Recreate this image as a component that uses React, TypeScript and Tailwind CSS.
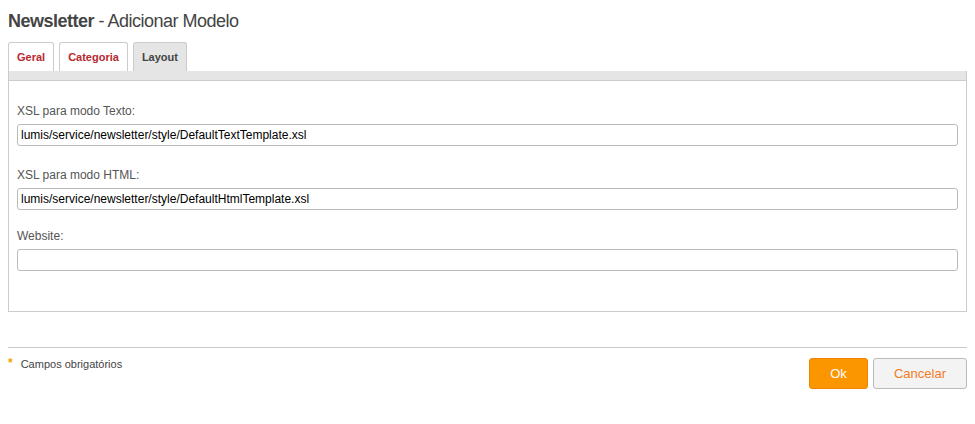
import React, { useState } from "react";

const fields = [
  { label: "XSL para modo Texto:", value: "lumis/service/newsletter/style/DefaultTextTemplate.xsl", gap: "" },
  { label: "XSL para modo HTML:", value: "lumis/service/newsletter/style/DefaultHtmlTemplate.xsl", gap: "mt-[22px]" },
  { label: "Website:", value: "", gap: "mt-[19px]" },
];

const tabs = ["Geral", "Categoria", "Layout"];

const App: React.FC = () => {
  const [active, setActive] = useState("Layout");

  return (
    <div className="bg-white px-2 pt-[9px] font-['Liberation_Sans',Arial,sans-serif] text-[#444]">
      <h1 className="text-[18px] leading-[24px] tracking-[-0.5px]">
        <span className="font-bold">Newsletter</span> - Adicionar Modelo
      </h1>

      <div className="mt-[9px] flex gap-[5px]">
        {tabs.map((t) => (
          <button
            key={t}
            onClick={() => setActive(t)}
            className={`h-[29px] rounded-t-[3px] border border-b-0 border-[#ccc] px-2 text-[11px] font-bold ${
              active === t ? "bg-[#e5e5e5] text-[#444]" : "bg-white text-[#b8282e]"
            }`}
          >
            {t}
          </button>
        ))}
      </div>

      <div className="h-[241px] border border-t-0 border-[#ccc]">
        <div className="h-[10px] border-b border-[#ccc] bg-[#e5e5e5]" />
        <div className="flex flex-col px-2 pt-[23px]">
          {fields.map((f) => (
            <div key={f.label} className={`flex flex-col ${f.gap}`}>
              <label className="text-[12px] leading-[14px] text-[#555]">{f.label}</label>
              <input
                defaultValue={f.value}
                className="mt-[6px] h-[22px] rounded-[3px] border border-[#bbb] px-[3px] text-[12px] text-black outline-none"
              />
            </div>
          ))}
        </div>
      </div>

      <div className="mt-[35px] border-t border-[#c8c8c8]" />
      <div className="flex items-start justify-between pt-[10px]">
        <div className="flex items-center gap-[8px] text-[11px] leading-[13px] text-[#444]">
          <span className="-mt-[3px] text-[12px] font-bold leading-none text-[#f5a300]">*</span>
          <span>Campos obrigatórios</span>
        </div>
        <div className="flex gap-[5px]">
          <button className="h-[31px] w-[59px] rounded-[3px] border border-[#f08300] bg-[#fb9500] text-[13px] text-white">
            Ok
          </button>
          <button className="h-[31px] w-[94px] rounded-[3px] border border-[#bbb] bg-[#f3f3f3] text-[13px] text-[#f47a1f]">
            Cancelar
          </button>
        </div>
      </div>
    </div>
  );
};

export default App;
